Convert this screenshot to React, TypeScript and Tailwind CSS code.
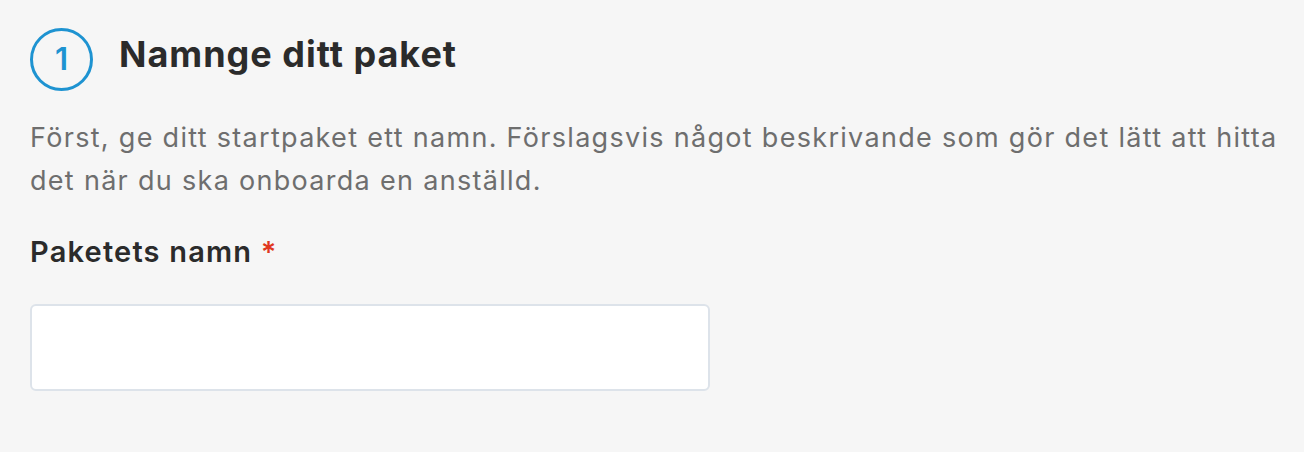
import React from 'react';

// Step 1 of the starter-package wizard: name the package.

export default function App() {
  return (
    <div
      className="min-h-[452px] w-full bg-[#f6f6f6] pl-[30px] pr-[20px] pt-[28px]"
      style={{ fontFamily: 'Inter, "Noto Sans", Arial, sans-serif' }}
    >
      <div className="flex items-start gap-[26px]">
        <div className="flex h-[63px] w-[63px] shrink-0 items-center justify-center rounded-full border-[3px] border-[#1e93d1] text-[31px] font-semibold text-[#1e93d1]">
          1
        </div>
        <h1 className="mt-[4px] text-[36px] leading-[44px] font-bold tracking-[1px] text-[#2b2b2b]">
          Namnge ditt paket
        </h1>
      </div>

      <p className="mt-[25px] text-[27px] leading-[43px] tracking-[1.3px] text-[#6e6e6e]">
        Först, ge ditt startpaket ett namn. Förslagsvis något beskrivande som gör det lätt att hitta det när du ska
        onboarda en anställd.
      </p>

      <label className="mt-[32px] block text-[29px] leading-[36px] font-semibold tracking-[1.2px] text-[#2b2b2b]">
        Paketets namn <span className="text-[#e0381f]">*</span>
      </label>

      <input
        type="text"
        className="mt-[34px] block h-[87px] w-[680px] rounded-[6px] border-2 border-[#dde3ea] bg-white px-4 text-[24px] outline-none"
      />
    </div>
  );
}
